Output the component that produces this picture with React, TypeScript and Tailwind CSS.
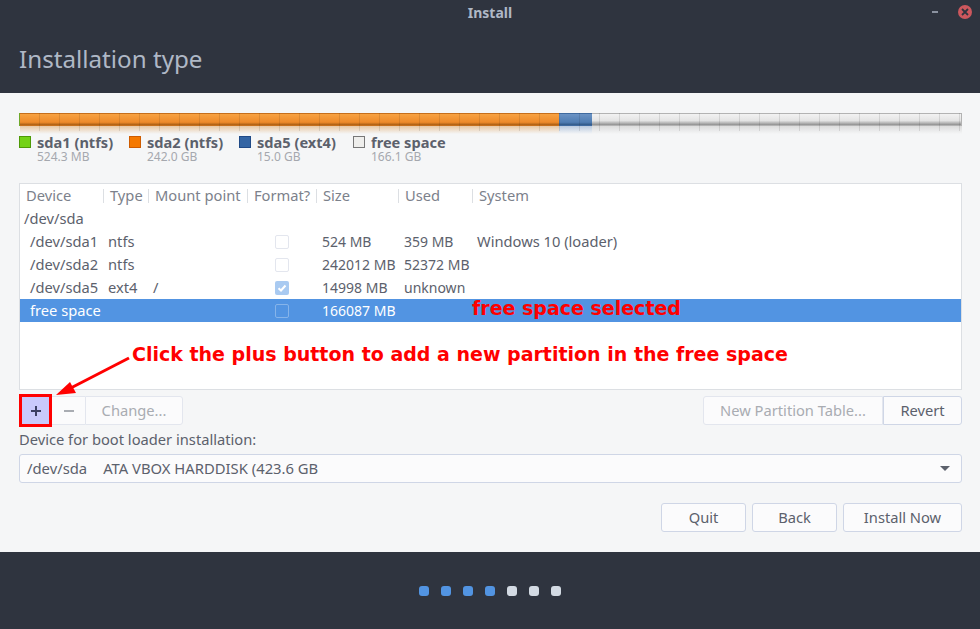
const columns = "grid grid-cols-[84px_45px_99px_69px_82px_74px_1fr]";

type Part = {
  device: string;
  type?: string;
  mount?: string;
  format: "off" | "on" | "selected";
  size: string;
  used?: string;
  system?: string;
};

const parts: Part[] = [
  { device: "/dev/sda1", type: "ntfs", format: "off", size: "524 MB", used: "359 MB", system: "Windows 10 (loader)" },
  { device: "/dev/sda2", type: "ntfs", format: "off", size: "242012 MB", used: "52372 MB" },
  { device: "/dev/sda5", type: "ext4", mount: "/", format: "on", size: "14998 MB", used: "unknown" },
];

const legend = [
  { name: "sda1 (ntfs)", size: "524.3 MB", color: "bg-[#73d216] border-[#4e9a06]", width: "w-[110px]" },
  { name: "sda2 (ntfs)", size: "242.0 GB", color: "bg-[#f57900] border-[#ce5c00]", width: "w-[110px]" },
  { name: "sda5 (ext4)", size: "15.0 GB", color: "bg-[#3465a4] border-[#204a87]", width: "w-[114px]" },
  { name: "free space", size: "166.1 GB", color: "bg-[#eeeeec] border-[#777]", width: "w-[110px]" },
];

function HeaderCell({ label, last }: { label: string; last?: boolean }) {
  return (
    <div className={`h-6 pl-[6px] pb-[2px] flex items-center ${last ? "" : "relative"}`}>
      {label}
      {!last && <span className="absolute right-0 top-[5px] h-[14px] w-px bg-[#dcdfe3]" />}
    </div>
  );
}

function FormatBox({ state }: { state: Part["format"] }) {
  if (state === "on") {
    return (
      <div className="w-[14px] h-[14px] rounded-[2px] bg-[#a9caf1] flex items-center justify-center">
        <svg width="10" height="10" viewBox="0 0 10 10" fill="none" stroke="#fff" strokeWidth="2">
          <path d="M1.5 5.2 4 7.5 8.5 2.5" />
        </svg>
      </div>
    );
  }
  return (
    <div
      className={`w-[14px] h-[14px] rounded-[2px] border ${
        state === "selected" ? "border-[#86b4ea] bg-[#5294e2]" : "border-[#e3e6ee] bg-white"
      }`}
    />
  );
}

function PartRow({ part }: { part: Part }) {
  return (
    <div className={`${columns} h-[23px] items-center`}>
      <div className="pl-[10px] pb-[2px]">{part.device}</div>
      <div className="pl-[4px] pb-[2px]">{part.type}</div>
      <div className="pl-[4px] pb-[2px]">{part.mount}</div>
      <div className="flex justify-center pl-[1px] pr-[2px]">
        <FormatBox state={part.format} />
      </div>
      <div className="pl-[5px] pb-[2px] text-[14px]">{part.size}</div>
      <div className="pl-[5px] pb-[2px] text-[14px]">{part.used}</div>
      <div className="pl-[4px] pb-[2px]">{part.system}</div>
    </div>
  );
}

function Segment({ className, reflect, style }: { className: string; reflect: string; style: string }) {
  return (
    <div className={className}>
      <div className={`h-[13px] border-y ${style}`} />
      <div className={`h-[8px] ${reflect}`} />
    </div>
  );
}

function Button({ children, className = "", disabled }: { children: React.ReactNode; className?: string; disabled?: boolean }) {
  return (
    <div
      className={`h-[29px] flex items-center justify-center border border-[#cfd6e6] rounded-[3px] bg-[#fbfbfc] ${
        disabled ? "text-[#a9acb2] border-[#e3e6ee] bg-[#f8f9fa]" : "text-[#5c616c]"
      } ${className}`}
    >
      {children}
    </div>
  );
}

export default function App() {
  return (
    <div className="relative w-[980px] h-[629px] flex flex-col overflow-hidden bg-[#f5f6f7] text-[14.7px] text-[#5c616c] font-['Noto_Sans',sans-serif]">
      <header className="h-[93px] bg-[#2f343f] shrink-0 flex flex-col">
        <div className="relative h-[26px] flex items-center justify-center">
          <span className="text-[14px] font-bold text-[#afb8c6] pb-[2px]">Install</span>
          <span className="absolute left-[932px] top-[11px] w-[6px] h-[2px] bg-[#8b92a0]" />
          <span className="absolute left-[958px] top-[5px] w-[14px] h-[14px] rounded-full bg-[#cc575d] flex items-center justify-center">
            <svg width="8" height="8" viewBox="0 0 8 8" stroke="#2f343f" strokeWidth="1.8">
              <path d="M1 1 7 7M7 1 1 7" />
            </svg>
          </span>
        </div>
        <h1 className="pl-[19px] mt-[2px] text-[24.2px] leading-[62px] h-[62px] text-[#afb8c6] font-normal">
          Installation type
        </h1>
      </header>

      <main className="h-[459px] shrink-0 pl-[19px] pr-[18px] pt-[20px] flex flex-col">
        <div className="relative flex h-[21px]">
          <span className="w-px h-[13px] bg-[#6fa82a]" />
          <Segment
            className="w-[539px]"
            style="border-[#c66f1c] bg-[linear-gradient(to_bottom,#f7a242,#ee8a2a_75%,#a85c12)]"
            reflect="bg-[linear-gradient(to_bottom,#e9c8a4,#f5f6f7)]"
          />
          <Segment
            className="w-[33px]"
            style="border-[#3f6a9f] bg-[linear-gradient(to_bottom,#6b93c4,#4f7cb2_75%,#2f5786)]"
            reflect="bg-[linear-gradient(to_bottom,#b9c9df,#f5f6f7)]"
          />
          <Segment
            className="flex-1"
            style="border-[#b3b3b3] border-r bg-[linear-gradient(to_bottom,#f2f2f2,#e4e4e4_60%,#8f8f8f)]"
            reflect="bg-[linear-gradient(to_bottom,#dcdcdc,#f5f6f7)]"
          />
          {/* scale ticks every 20px across the whole bar */}
          <span className="absolute left-[1px] right-[1px] top-0 h-[18px] bg-[repeating-linear-gradient(to_right,transparent_0,transparent_19px,rgba(0,0,0,0.1)_19px,rgba(0,0,0,0.1)_20px)]" />
        </div>

        <div className="flex mt-[1px] h-[31px]">
          {legend.map((item) => (
            <div key={item.name} className={`flex gap-[6px] ${item.width}`}>
              <span className={`w-[12px] h-[12px] border mt-[1px] shrink-0 ${item.color}`} />
              <div>
                <div className="text-[14.6px] leading-[15px] font-bold text-[#5c616c] whitespace-nowrap">{item.name}</div>
                <div className="text-[12px] leading-[14px] text-[#a5a8ae] whitespace-nowrap">{item.size}</div>
              </div>
            </div>
          ))}
        </div>

        <div className="mt-[17px] h-[207px] border border-[#dcdfe3] bg-white flex flex-col">
          <div className={`${columns} text-[#7c818b]`}>
            <HeaderCell label="Device" />
            <HeaderCell label="Type" />
            <HeaderCell label="Mount point" />
            <HeaderCell label="Format?" />
            <HeaderCell label="Size" />
            <HeaderCell label="Used" />
            <HeaderCell label="System" last />
          </div>
          <div className="h-[23px] pl-[4px] pb-[2px] flex items-center">/dev/sda</div>
          <div className="-mt-[1px]">
            {parts.map((part) => (
              <PartRow key={part.device} part={part} />
            ))}
            <div className={`${columns} h-[23px] items-center bg-[#5294e2] text-white`}>
              <div className="pl-[10px] pb-[2px]">free space</div>
              <div />
              <div />
              <div className="flex justify-center pl-[1px] pr-[2px]">
                <FormatBox state="selected" />
              </div>
              <div className="pl-[5px] pb-[2px] text-[14px]">166087 MB</div>
            </div>
          </div>
        </div>

        <div className="mt-[6px] flex items-center justify-between">
          <div className="flex items-center">
            <div className="w-[33px] h-[33px] -my-[2px] border-[3px] border-[#ff0000] bg-[#c9c9fb] flex items-center justify-center text-[#3c3f63]">
              <svg width="12" height="12" viewBox="0 0 12 12" stroke="currentColor" strokeWidth="2">
                <path d="M1 6h10M6 1v10" />
              </svg>
            </div>
            <Button disabled className="w-[33px] rounded-none border-l-0 border-r-0">
              <span className="w-[10px] h-[2px] bg-[#a9acb2]" />
            </Button>
            <Button disabled className="w-[98px] rounded-l-none">Change...</Button>
          </div>
          <div className="flex">
            <Button disabled className="w-[180px] rounded-r-none">New Partition Table...</Button>
            <Button className="w-[79px] rounded-l-none">Revert</Button>
          </div>
        </div>

        <div className="mt-[4px] h-[20px] leading-[20px]">Device for boot loader installation:</div>
        <div className="mt-[5px] h-[29px] border border-[#cfd6e6] rounded-[3px] bg-[#fbfbfc] flex items-center justify-between pl-[7px] pr-[11px] text-[14.8px]">
          <span className="flex gap-[16px] whitespace-nowrap pb-[1px]">
            <span>/dev/sda</span>
            <span>ATA VBOX HARDDISK (423.6 GB</span>
          </span>
          <span className="w-0 h-0 border-x-[5px] border-x-transparent border-t-[5px] border-t-[#5c616c]" />
        </div>

        <div className="mt-[20px] flex justify-end gap-[6px]">
          <Button className="w-[85px]">Quit</Button>
          <Button className="w-[85px]">Back</Button>
          <Button className="w-[119px]">Install Now</Button>
        </div>
      </main>

      <footer className="flex-1 bg-[#2f343f] flex items-center justify-center gap-[12px] pt-[1px]">
        {[0, 1, 2, 3, 4, 5, 6].map((i) => (
          <span key={i} className={`w-[10px] h-[10px] rounded-[3px] ${i < 4 ? "bg-[#5294e2]" : "bg-[#d3dae3]"}`} />
        ))}
      </footer>

      {/* annotations drawn over the screenshot */}
      <span className="absolute left-[472px] top-[296px] text-[19px] leading-[24px] font-bold text-[#ff0000] font-['DejaVu_Sans',sans-serif] whitespace-nowrap">
        free space selected
      </span>
      <span className="absolute left-[132px] top-[342px] text-[19px] leading-[24px] font-bold text-[#ff0000] font-['DejaVu_Sans',sans-serif] whitespace-nowrap">
        Click the plus button to add a new partition in the free space
      </span>
      <svg className="absolute left-[50px] top-[350px]" width="85" height="50" viewBox="0 0 85 50">
        <path d="M79 8 15 41" stroke="#ff0000" strokeWidth="3" fill="none" />
        <path d="M6 45 20 32 26 43Z" fill="#ff0000" />
      </svg>
    </div>
  );
}
